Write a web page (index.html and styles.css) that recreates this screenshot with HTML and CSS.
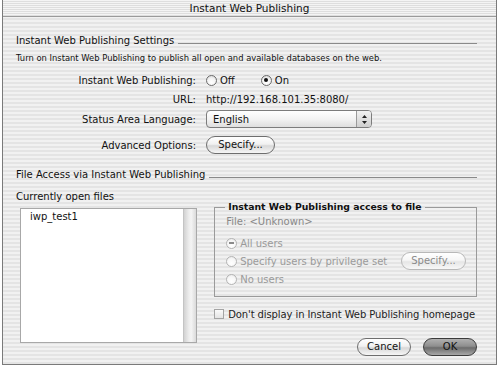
FILE: index.html
```html
<!DOCTYPE html>
<html lang="en">
<head>
    <meta charset="UTF-8">
    <title>Instant Web Publishing</title>
    <link rel="stylesheet" href="styles.css">
</head>
<body>
    <div class="window">
        <div class="titlebar">Instant Web Publishing</div>
        <div class="content">
            <div class="section-head"><span>Instant Web Publishing Settings</span><div class="rule"></div></div>
            <div class="desc">Turn on Instant Web Publishing to publish all open and available databases on the web.</div>

            <div class="form">
                <div class="row row-iwp">
                    <div class="label">Instant Web Publishing:</div>
                    <div class="control">
                        <span class="radio"></span><span class="radio-text off">Off</span>
                        <span class="radio checked"></span><span class="radio-text">On</span>
                    </div>
                </div>
                <div class="row row-url">
                    <div class="label">URL:</div>
                    <div class="control">http://192.168.101.35:8080/</div>
                </div>
                <div class="row row-lang">
                    <div class="label">Status Area Language:</div>
                    <div class="control">
                        <div class="popup">
                            <span>English</span>
                            <div class="arrows">
                                <svg width="7" height="11" viewBox="0 0 7 11"><path d="M3.5 1 L6 4 L1 4 Z M3.5 10 L6 7 L1 7 Z" fill="#222"/></svg>
                            </div>
                        </div>
                    </div>
                </div>
                <div class="row row-adv">
                    <div class="label">Advanced Options:</div>
                    <div class="control"><div class="btn specify">Specify...</div></div>
                </div>
            </div>

            <div class="section-head section-two"><span>File Access via Instant Web Publishing</span><div class="rule"></div></div>

            <div class="lower">
                <div class="files">
                    <div class="files-label">Currently open files</div>
                    <div class="listbox">
                        <div class="list-items">
                            <div class="list-item">iwp_test1</div>
                        </div>
                        <div class="scrollbar"></div>
                    </div>
                </div>
                <div class="access">
                    <fieldset class="group">
                        <legend>Instant Web Publishing access to file</legend>
                        <div class="file-name">File: &lt;Unknown&gt;</div>
                        <div class="opt"><span class="radio dis mixed"></span><span>All users</span></div>
                        <div class="opt"><span class="radio dis"></span><span>Specify users by privilege set</span><div class="btn dis-btn">Specify...</div></div>
                        <div class="opt"><span class="radio dis"></span><span>No users</span></div>
                    </fieldset>
                    <div class="check-row"><span class="checkbox"></span><span>Don't display in Instant Web Publishing homepage</span></div>
                    <div class="actions">
                        <div class="btn cancel">Cancel</div>
                        <div class="btn ok">OK</div>
                    </div>
                </div>
            </div>
        </div>
    </div>
</body>
</html>
```

FILE: styles.css
```css
body {
    margin: 0;
    background: #ffffff;
    font-family: "DejaVu Sans", sans-serif;
    font-size: 10px;
    color: #111;
}
.window {
    width: 495px;
    height: 365px;
    margin-left: 2px;
    border: 1px solid #7a7a7a;
    border-top: none;
    box-sizing: border-box;
    background: repeating-linear-gradient(#f1f1f1 0, #f1f1f1 2px, #e4e4e4 2px, #e4e4e4 4px);
}
.titlebar {
    height: 16px;
    line-height: 17px;
    text-align: center;
    font-size: 10.5px;
    color: #111;
    border-bottom: 1px solid #9a9a9a;
    background: repeating-linear-gradient(#f4f4f4 0, #f4f4f4 1px, #dedede 1px, #dedede 2px);
}
.content {
    padding: 17px 19px 0 13px;
}
.section-head {
    display: flex;
    align-items: center;
    height: 14px;
    line-height: 14px;
}
.section-head .rule {
    flex: 1;
    height: 1px;
    background: #8a8a8a;
    margin: 4px 0 0 4px;
}
.desc {
    margin-top: 3px;
    height: 14px;
    line-height: 14px;
    font-size: 8.4px;
}
.form {
    margin-top: 6px;
}
.row {
    display: flex;
    align-items: center;
    height: 18px;
}
.row-url { margin-top: 1px; }
.row-lang { margin-top: 2px; }
.row-adv { margin-top: 8px; }
.label {
    width: 180px;
    text-align: right;
}
.control {
    margin-left: 10px;
    display: flex;
    align-items: center;
}
.radio {
    width: 11px;
    height: 11px;
    border-radius: 50%;
    border: 1px solid #6c6c6c;
    background: radial-gradient(circle at 50% 70%, #ffffff 0, #f4f4f4 50%, #cfcfcf 100%);
    box-sizing: border-box;
    display: inline-flex;
    align-items: center;
    justify-content: center;
    flex-shrink: 0;
}
.radio.checked::after {
    content: "";
    width: 4px;
    height: 4px;
    border-radius: 50%;
    background: #111;
}
.radio-text {
    margin-left: 3px;
}
.radio-text.off {
    margin-right: 26px;
}
.popup {
    width: 166px;
    height: 18px;
    border: 1px solid #7c7c7c;
    border-radius: 4px;
    box-sizing: border-box;
    background: linear-gradient(#ffffff, #f3f3f3 50%, #dedede);
    display: flex;
    align-items: center;
    justify-content: space-between;
    padding-left: 6px;
    overflow: hidden;
}
.arrows {
    width: 14px;
    height: 16px;
    border-left: 1px solid #9a9a9a;
    background: linear-gradient(#f2f2f2, #cfcfcf);
    display: flex;
    align-items: center;
    justify-content: center;
}
.btn {
    height: 18px;
    line-height: 16px;
    box-sizing: border-box;
    border: 1px solid #6e6e6e;
    border-radius: 9px;
    background: linear-gradient(#ffffff, #f1f1f1 45%, #d8d8d8 55%, #f6f6f6);
    text-align: center;
}
.specify {
    width: 69px;
}
.section-two {
    margin-top: 14px;
}
.lower {
    display: flex;
    margin-top: 8px;
}
.files {
    width: 184px;
}
.files-label {
    height: 14px;
    line-height: 14px;
}
.listbox {
    margin: 4px 0 0 4px;
    width: 177px;
    height: 135px;
    box-sizing: border-box;
    border: 1px solid #a8a8a8;
    background: #fff;
    display: flex;
}
.list-items {
    flex: 1;
    padding: 1px 0 0 9px;
}
.list-item {
    height: 14px;
    line-height: 14px;
}
.scrollbar {
    width: 12px;
    background: linear-gradient(90deg, #d2d2d2, #ececec 40%, #f4f4f4 60%, #dadada);
    border-left: 1px solid #c4c4c4;
}
.access {
    width: 264px;
    margin-left: 15px;
}
.group {
    margin: 11px 0 0 0;
    padding: 0 0 0 11px;
    height: 96px;
    box-sizing: border-box;
    border: 1px solid #9a9a9a;
    color: #9a9a9a;
}
.group legend {
    color: #111;
    font-weight: bold;
    font-size: 9.3px;
    padding: 0 3px;
    margin-left: -1px;
    line-height: 12px;
}
.file-name {
    height: 14px;
    line-height: 14px;
    margin-top: 2px;
    color: #888;
}
.opt {
    display: flex;
    align-items: center;
    height: 18px;
}
.opt:nth-of-type(2) { margin-top: 5px; }
.opt .radio {
    margin-right: 3px;
}
.radio.dis {
    border-color: #b4b4b4;
    background: radial-gradient(circle at 50% 70%, #ffffff 0, #f6f6f6 60%, #e0e0e0 100%);
}
.radio.mixed::after {
    content: "";
    width: 5px;
    height: 2px;
    background: #8a8a8a;
}
.dis-btn {
    width: 65px;
    margin-left: auto;
    margin-right: 10px;
    color: #8a8a8a;
    border-color: #b8b8b8;
    background: linear-gradient(#ffffff, #f6f6f6 45%, #e6e6e6 55%, #f8f8f8);
}
.check-row {
    display: flex;
    align-items: center;
    height: 14px;
    margin-top: 10px;
    color: #222;
    white-space: nowrap;
    letter-spacing: -0.1px;
}
.checkbox {
    width: 10px;
    height: 10px;
    box-sizing: border-box;
    border: 1px solid #a4a4a4;
    background: linear-gradient(#fafafa, #e4e4e4);
    margin-right: 4px;
    flex-shrink: 0;
}
.actions {
    display: flex;
    justify-content: flex-end;
    gap: 12px;
    margin-top: 17px;
}
.cancel {
    width: 54px;
}
.ok {
    width: 54px;
    border-color: #3c3c3c;
    background: linear-gradient(#b0b0b0, #8e8e8e 45%, #6c6c6c 55%, #a8a8a8);
    color: #111;
}
```
